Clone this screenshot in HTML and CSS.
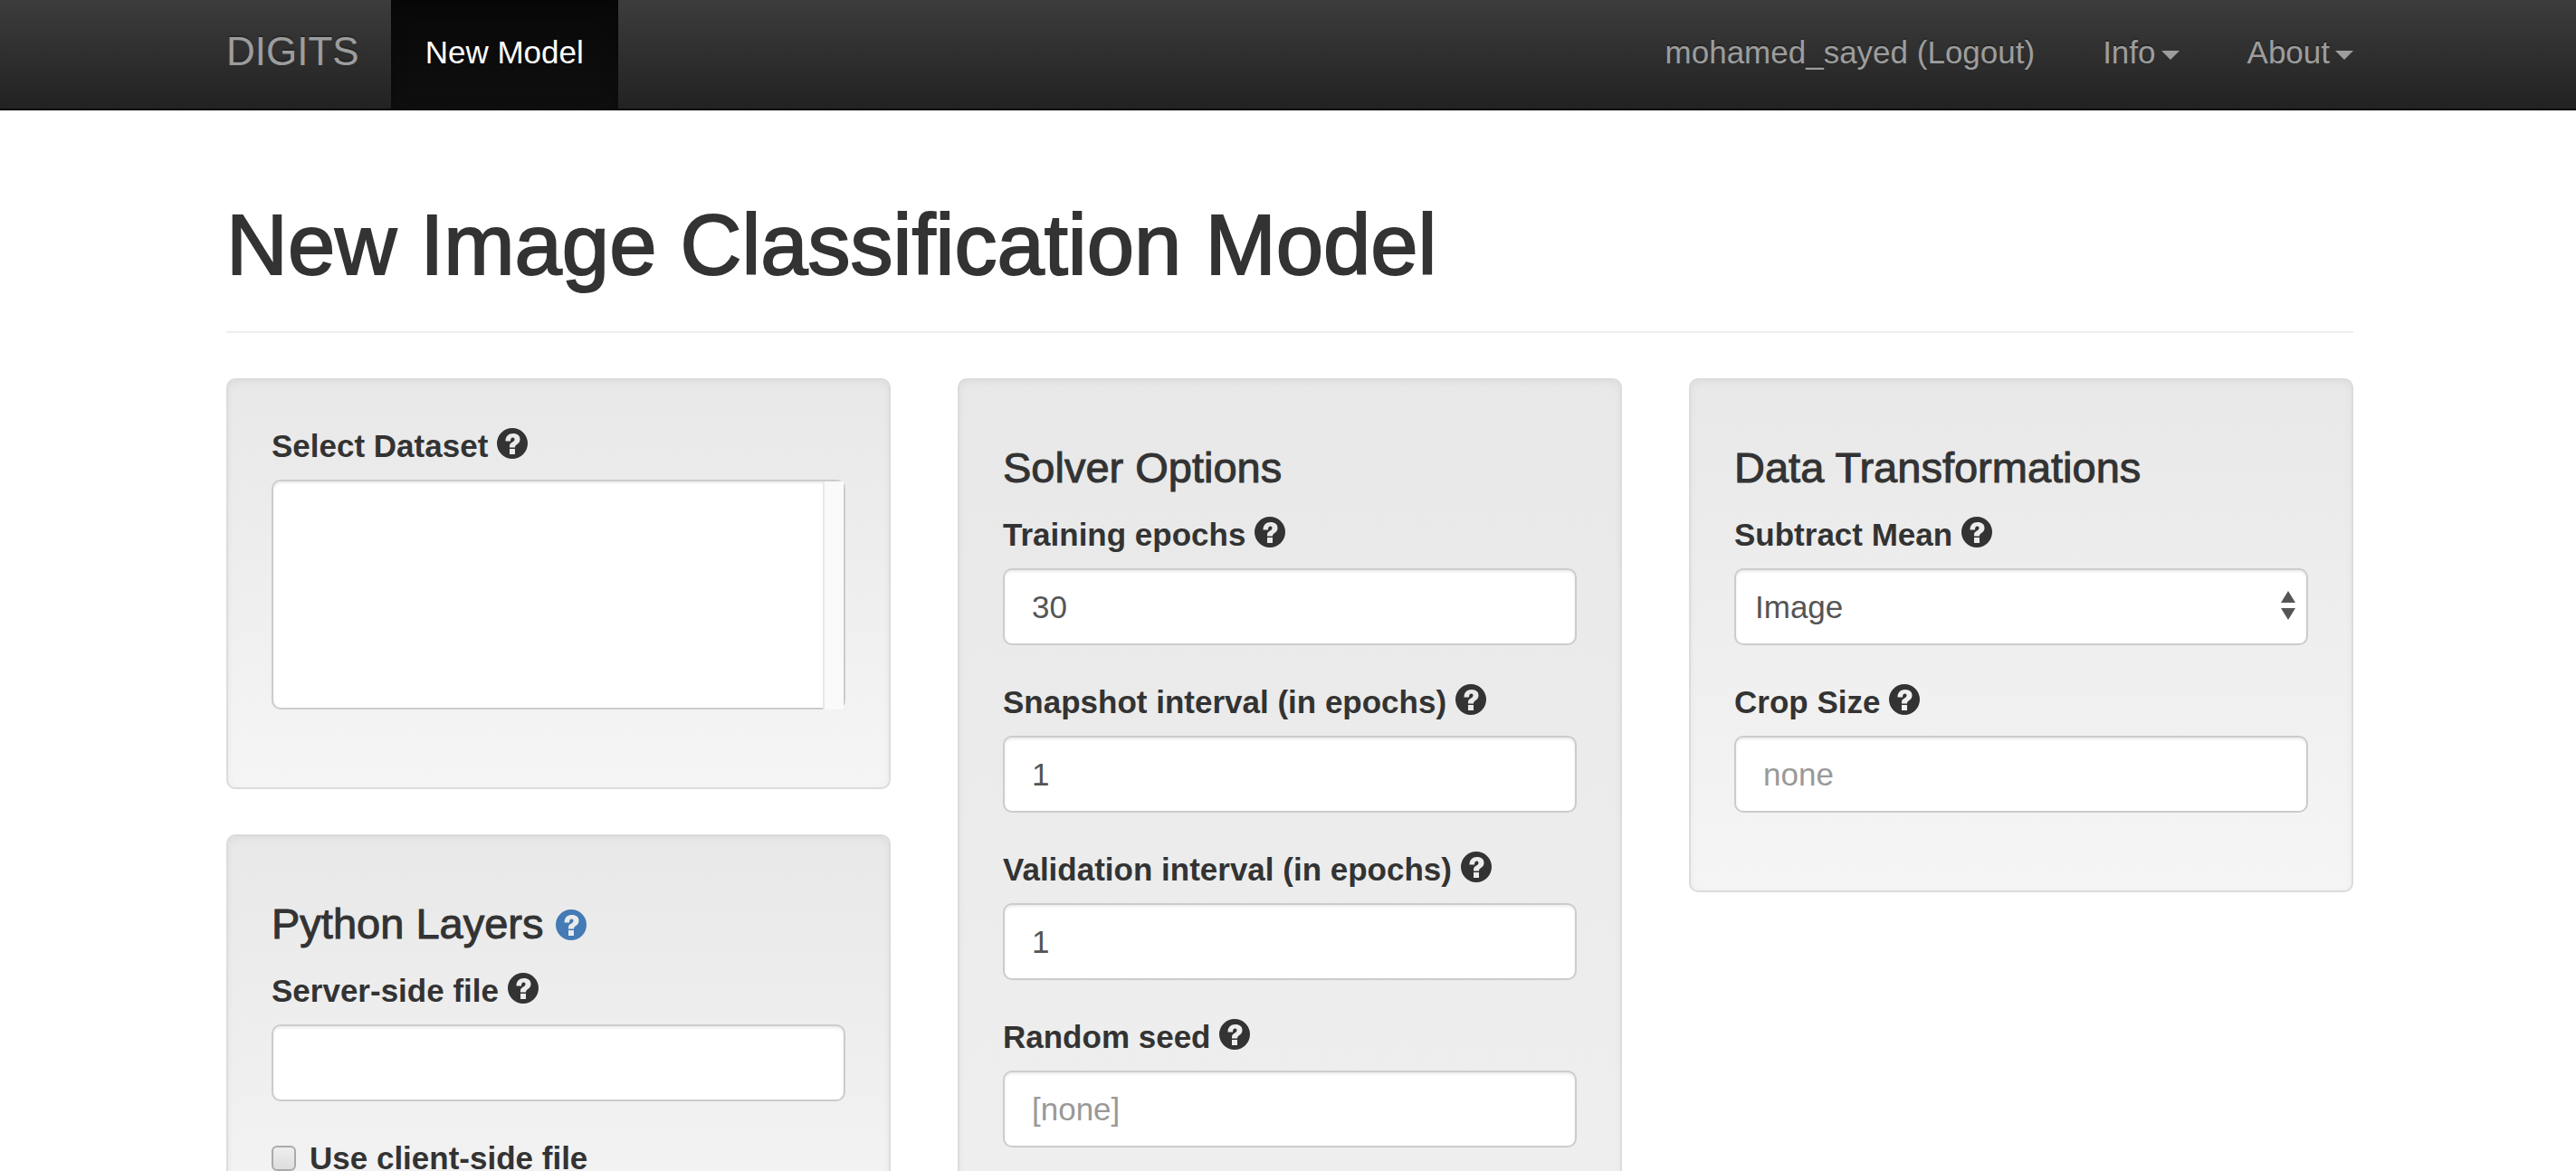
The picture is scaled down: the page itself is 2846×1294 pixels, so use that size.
FILE: index.html
```html
<!DOCTYPE html>
<html lang="en">
<head>
<meta charset="utf-8">
<title>New Image Classification Model</title>
<link rel="stylesheet" href="styles.css">
</head>
<body>
<svg width="0" height="0" class="sprite" aria-hidden="true">
  <symbol id="question" viewBox="0 0 34 34">
    <path fill-rule="evenodd" d="M17 0a17 17 0 1 1 0 34a17 17 0 1 1 0-34zM14 23v6h6v-6zM9.500 14.500h5.500c0-3 1-4 2.500-4s2 .700 2 2c0 1.300-.700 1.900-2 2.800c-2.200 1.400-3.500 2.200-3.500 4.700v1.500h6c0-1.800.800-2.500 2.200-3.500c2-1.300 3.300-3 3.300-5.600c0-4-3-6.400-7.700-6.400c-5 0-8.300 3-8.300 8.500z"/>
  </symbol>
</svg>
<nav class="navbar">
  <a class="brand" href="#">DIGITS</a>
  <a class="nav-link active" href="#">New Model</a>
  <div class="nav-right">
    <a class="nav-link" href="#">mohamed_sayed (Logout)</a>
    <a class="nav-link" href="#">Info<span class="caret"></span></a>
    <a class="nav-link" href="#">About<span class="caret"></span></a>
  </div>
</nav>
<main class="page">
  <h1>New Image Classification Model</h1>
  <form class="columns">
    <div class="column">
      <section class="well">
        <div class="group">
          <label for="dataset">Select Dataset <svg class="help"><use href="#question"/></svg></label>
          <div class="listbox"><select id="dataset" class="control" size="5"></select></div>
        </div>
      </section>
      <section class="well">
        <h4>Python Layers <a href="#" class="help-link" aria-label="Python layers help"><svg class="help"><use href="#question"/></svg></a></h4>
        <div class="group">
          <label for="server-file">Server-side file <svg class="help"><use href="#question"/></svg></label>
          <input id="server-file" class="control" type="text">
        </div>
        <div class="group">
          <label class="check" for="client-file"><input id="client-file" type="checkbox">Use client-side file</label>
        </div>
      </section>
    </div>
    <div class="column">
      <section class="well well-tall">
        <h4>Solver Options</h4>
        <div class="group">
          <label for="epochs">Training epochs <svg class="help"><use href="#question"/></svg></label>
          <input id="epochs" class="control" type="text" value="30">
        </div>
        <div class="group">
          <label for="snapshot">Snapshot interval (in epochs) <svg class="help"><use href="#question"/></svg></label>
          <input id="snapshot" class="control" type="text" value="1">
        </div>
        <div class="group">
          <label for="validation">Validation interval (in epochs) <svg class="help"><use href="#question"/></svg></label>
          <input id="validation" class="control" type="text" value="1">
        </div>
        <div class="group">
          <label for="seed">Random seed <svg class="help"><use href="#question"/></svg></label>
          <input id="seed" class="control" type="text" placeholder="[none]">
        </div>
      </section>
    </div>
    <div class="column">
      <section class="well">
        <h4>Data Transformations</h4>
        <div class="group">
          <label for="mean">Subtract Mean <svg class="help"><use href="#question"/></svg></label>
          <div class="dropdown">
            <select id="mean" class="control"><option>Image</option></select>
            <svg class="arrows" viewBox="0 0 16 32"><path d="M8 0l8 13H0zM8 32l8-13H0z"/></svg>
          </div>
        </div>
        <div class="group">
          <label for="crop">Crop Size <svg class="help"><use href="#question"/></svg></label>
          <input id="crop" class="control" type="text" placeholder="none">
        </div>
      </section>
    </div>
  </form>
</main>
</body>
</html>
```
FILE: styles.css
```css
* { box-sizing: border-box; }

body {
  margin: 0;
  font: 35px/50px "Liberation Sans", Arial, sans-serif;
  color: #333;
  background: #fff;
}

.sprite { position: absolute; }

.navbar {
  display: flex;
  height: 122px;
  padding: 0 246px 0 250px;
  background: linear-gradient(#3c3c3c, #222);
  border-bottom: 2px solid #080808;
}

.navbar a {
  color: #9d9d9d;
  text-decoration: none;
  text-shadow: 0 -2px 0 rgba(0, 0, 0, .25);
  line-height: 116px;
}

.navbar .brand {
  font-size: 44px;
  line-height: 114px;
  margin-right: 35px;
}

.navbar .active {
  padding: 0 38px;
  color: #fff;
  background: linear-gradient(#080808, #0f0f0f);
  box-shadow: inset 0 6px 18px rgba(0, 0, 0, .25);
}

.nav-right {
  display: flex;
  gap: 75px;
  margin-left: auto;
}

.caret {
  display: inline-block;
  margin-left: 6px;
  vertical-align: middle;
  border: 10px solid transparent;
  border-top-color: #9d9d9d;
  border-bottom: 0;
}

.page { padding: 99px 246px 0 250px; }

h1 {
  margin: 0 0 50px;
  padding-bottom: 45px;
  border-bottom: 2px solid #eee;
  font-size: 94px;
  font-weight: 400;
  line-height: 100px;
  -webkit-text-stroke: 2px #333;
}

.columns {
  display: grid;
  grid-template-columns: repeat(3, 1fr);
  gap: 74px;
}

.column {
  display: flex;
  flex-direction: column;
  gap: 50px;
  min-width: 0;
}

.well {
  padding: 48px;
  border: 2px solid #dcdcdc;
  border-radius: 10px;
  background: linear-gradient(#e8e8e8, #f5f5f5);
  box-shadow: inset 0 2px 8px rgba(0, 0, 0, .05);
}

.well-tall { min-height: 1700px; }

h4 {
  margin: 24px 0;
  font-size: 47px;
  font-weight: 400;
  line-height: 50px;
  -webkit-text-stroke: 1px #333;
}

.group { margin-bottom: 38px; }

label {
  display: block;
  margin-bottom: 12px;
  font-weight: 700;
}

.help {
  width: 34px;
  height: 34px;
  vertical-align: -2px;
  fill: currentColor;
}

.help-link { color: #447ab5; }

.control {
  display: block;
  width: 100%;
  height: 85px;
  padding: 0 30px;
  border: 2px solid #ccc;
  border-radius: 10px;
  background: #fff;
  color: #555;
  font: inherit;
  box-shadow: inset 0 2px 3px rgba(0, 0, 0, .08);
  appearance: none;
}

.control::placeholder { color: #999; }

.listbox, .dropdown { position: relative; }

.listbox .control {
  height: 254px;
  overflow: hidden;
}

/* empty scrollbar track */
.listbox::after {
  content: "";
  position: absolute;
  inset: 2px 2px 0 auto;
  width: 21px;
  border-left: 2px solid #e8e8e8;
  background: #fafafa;
}

.dropdown .control { padding: 0 21px; }

.arrows {
  position: absolute;
  top: 25px;
  right: 14px;
  width: 16px;
  height: 32px;
  fill: #555;
}

.check {
  display: flex;
  align-items: center;
  gap: 15px;
}

.check input {
  width: 27px;
  height: 28px;
  margin: 0;
  border: 2px solid #aaa;
  border-radius: 6px;
  background: linear-gradient(#eee, #ddd);
  appearance: none;
}
```
